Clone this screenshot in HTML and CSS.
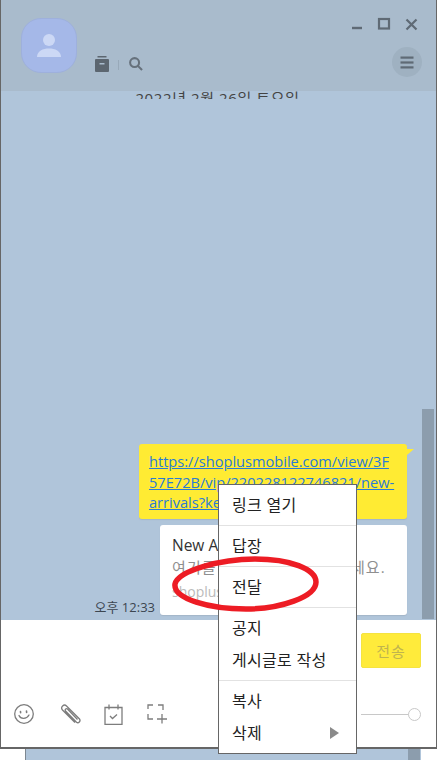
FILE: index.html
```html
<!DOCTYPE html>
<html lang="ko">
<head>
    <meta charset="UTF-8">
    <title>채팅</title>
    <link rel="stylesheet" href="styles.css">
</head>
<body>
    <!-- window behind the chat, only its bottom edge shows -->
    <div class="back-window"><div class="back-bar"></div></div>

    <div class="window">
        <header class="top">
            <div class="avatar">
                <svg width="38" height="38" viewBox="0 0 38 38"><circle cx="19" cy="13" r="6" fill="#ccd8f5"/><path d="M7 30c0-6 6-8.500 12-8.500S31 24 31 30z" fill="#ccd8f5"/></svg>
            </div>
            <div class="tools">
                <svg width="14" height="16" viewBox="0 0 14 16"><path d="M2.500 0h9v1.500h-9z" fill="#5c6670"/><path d="M1 3h12a1 1 0 0 1 1 1v11a1 1 0 0 1-1 1H1a1 1 0 0 1-1-1V4a1 1 0 0 1 1-1z" fill="#5c6670"/><path d="M4.500 7h5v1.500h-5z" fill="#a9bbcc"/></svg>
                <span class="tool-sep"></span>
                <svg width="14" height="14" viewBox="0 0 15 15" fill="none" stroke="#66717c" stroke-width="2.200"><circle cx="6" cy="6" r="4.800"/><path d="M9.500 9.500L14 14"/></svg>
            </div>
            <div class="controls">
                <div class="win-btns">
                    <svg width="12" height="12" viewBox="0 0 12 12"><path d="M1 10h10" stroke="#5f6a75" stroke-width="2.400"/></svg>
                    <svg width="14" height="14" viewBox="0 0 14 14" fill="none"><rect x="2" y="2" width="10" height="9.500" stroke="#5f6a75" stroke-width="2.200"/></svg>
                    <svg width="13" height="13" viewBox="0 0 13 13"><path d="M1.500 1.500l10 10M11.500 1.500l-10 10" stroke="#5f6a75" stroke-width="2.200"/></svg>
                </div>
                <div class="menu-btn">
                    <svg width="14" height="13" viewBox="0 0 14 13" fill="#5f6a75"><rect width="13" height="2.200" x="0.500" y="0.500"/><rect width="13" height="2.200" x="0.500" y="5.400"/><rect width="13" height="2.200" x="0.500" y="10.300"/></svg>
                </div>
            </div>
        </header>

        <main class="chat">
            <!-- date line is scrolled away, only its top shows -->
            <div class="date-clip"><div class="date">2022년 2월 26일 토요일</div></div>
            <div class="scrollbar"></div>
            <div class="msg-list">
                <div class="bubble">
                    <a href="#">https://shoplusmobile.com/view/3F<br>57E72B/vip/220228122746821/new-<br>arrivals?key=1</a>
                </div>
                <div class="msg-row">
                    <span class="time">오후 12:33</span>
                    <div class="card">
                        <div class="card-title">New Arrivals</div>
                        <div class="card-desc">여기를 눌러 링크를 확인하세요.</div>
                        <div class="card-host">shoplusmobile.com</div>
                    </div>
                </div>
            </div>
        </main>

        <section class="input">
            <div class="input-top">
                <button class="send">전송</button>
            </div>
            <div class="input-bottom">
                <div class="input-icons">
                    <svg width="22" height="22" viewBox="0 0 22 22" fill="none" stroke="#7d7d7d" stroke-width="1.300"><circle cx="11" cy="11" r="9.300"/><path d="M6 12.500c1.500 3.500 7 4.500 10-.5" stroke-linecap="round"/><path d="M7.500 8.500l.1 1.200M13.500 8l.1 1.500" stroke-width="1.600" stroke-linecap="round"/></svg>
                    <svg width="22" height="22" viewBox="0 0 22 22" fill="none" stroke="#7d7d7d" stroke-width="1.300"><path d="M16 19.500L3.500 7C1 4 5 .500 7.500 3l13 13c1.500 2-1 4.800-3 3.200L6.500 8c-1-1.500.8-3 2-2l10 10.500"/></svg>
                    <svg width="19" height="21" viewBox="0 0 19 21" fill="none" stroke="#7d7d7d" stroke-width="1.300"><path d="M1 3.500h17v17H1z"/><path d="M5 .500v5M14 .500v5" /><path d="M6 12l2.500 2.500L13 10.500"/></svg>
                    <svg width="21" height="20" viewBox="0 0 21 20" fill="none" stroke="#7d7d7d" stroke-width="1.300"><path d="M1 5V1h5M11 1h5v5M1 10v5h5"/><path d="M15 10v9.500M10 15h10"/></svg>
                </div>
                <div class="slider"><span class="slider-line"></span><span class="slider-knob"></span></div>
            </div>
        </section>
    </div>

    <div class="context-menu">
        <div class="item">링크 열기</div>
        <div class="sep"></div>
        <div class="item">답장</div>
        <div class="sep"></div>
        <div class="item">전달</div>
        <div class="sep"></div>
        <div class="item">공지</div>
        <div class="item">게시글로 작성</div>
        <div class="sep"></div>
        <div class="item">복사</div>
        <div class="item item-more">삭제<span class="arrow"></span></div>
    </div>

    <!-- red marker drawn over the screenshot -->
    <svg class="marker" width="152" height="62" viewBox="0 0 152 62" fill="none">
        <path d="M5 31C8 18 50 6 85 6c35 0 61 10 61 23 0 15-36 27-70 27C40 56 3 46 5 31z" stroke="#ed1c24" stroke-width="5.500"/>
    </svg>
</body>
</html>
```

FILE: styles.css
```css
* { box-sizing: border-box; }
html, body { margin: 0; height: 760px; overflow: hidden; }
body {
    background: #fff;
    font-family: "Open Sans", "Noto Sans CJK KR", sans-serif;
    position: relative;
}

.back-window {
    position: absolute;
    left: 25px;
    top: 700px;
    width: 396px;
    height: 60px;
    background: #b0c5da;
    border-left: 1px solid #7d8790;
}
.back-bar {
    position: absolute;
    right: 1px;
    top: 0;
    width: 12px;
    height: 60px;
    background: #8c9dad;
}

.window {
    position: relative;
    width: 437px;
    height: 749px;
    display: flex;
    flex-direction: column;
    background: #b0c5da;
    border-left: 1px solid #666;
    border-right: 1px solid #666;
    border-bottom: 2px solid #666;
    overflow: hidden;
}

.top {
    height: 91px;
    flex: none;
    display: flex;
    background: #a9bbcc;
    position: relative;
    z-index: 1;
    padding: 18px 0 0 20px;
}
.avatar {
    width: 56px;
    height: 55px;
    background: #a5b8e8;
    border: 1px solid #9eb0dc;
    border-radius: 20px;
    display: flex;
    align-items: center;
    justify-content: center;
}
.tools {
    display: flex;
    align-items: center;
    margin: 38px 0 0 18px;
    height: 16px;
}
.tool-sep {
    width: 1px;
    height: 10px;
    background: #98a9b9;
    margin: 2px 10px 0 9px;
}
.controls {
    margin-left: auto;
    display: flex;
    flex-direction: column;
    align-items: flex-end;
    margin-top: -1px;
    padding-right: 14px;
}
.win-btns {
    display: flex;
    align-items: center;
    gap: 14px;
    margin-right: 4px;
}
.menu-btn {
    width: 30px;
    height: 30px;
    border-radius: 50%;
    background: #9fb1c1;
    display: flex;
    align-items: center;
    justify-content: center;
    margin-top: 16px;
}

.chat {
    flex: 1;
    position: relative;
    overflow: hidden;
    display: flex;
    flex-direction: column;
}
.date-clip {
    height: 8px;
    overflow: hidden;
    flex: none;
}
.date {
    text-align: center;
    font-size: 15px;
    letter-spacing: 0.600px;
    line-height: 18px;
    color: #444;
    margin-top: -2px;
    padding-right: 2px;
}
.scrollbar {
    position: absolute;
    left: 421px;
    top: 318px;
    width: 12px;
    height: 210px;
    background: #8c9dad;
}
.msg-list {
    margin-top: auto;
    padding: 0 29px 5px 0;
    display: flex;
    flex-direction: column;
    align-items: flex-end;
    gap: 6px;
}
.bubble {
    width: 268px;
    height: 75px;
    background: #ffeb33;
    border-radius: 3px;
    padding: 7px 10px;
    font-size: 14.600px;
    line-height: 20.500px;
    position: relative;
    white-space: nowrap;
    box-shadow: 0 1px 1px #a3b5c8;
}
.bubble::after {
    content: "";
    position: absolute;
    left: 268px;
    top: 5px;
    border-top: 6px solid #ffeb33;
    border-right: 7px solid transparent;
}
.bubble a { color: #2a7bd6; text-decoration: underline; }
.msg-row {
    display: flex;
    align-items: flex-end;
    gap: 5px;
}
.time {
    font-size: 13px;
    line-height: 16px;
    color: #3c4650;
}
.card {
    width: 247px;
    height: 90px;
    background: #fff;
    border-radius: 3px;
    padding: 10px 12px;
    box-shadow: 0 1px 1px #a3b5c8;
}
.card-title { font-size: 15.500px; line-height: 20px; color: #333; white-space: nowrap; }
.card-desc { font-size: 15px; letter-spacing: 1.100px; line-height: 24px; color: #8f8f8f; white-space: nowrap; }
.card-host { font-size: 14px; line-height: 22px; color: #bbb; white-space: nowrap; margin-top: 2px; }

.input {
    height: 127px;
    flex: none;
    background: #fff;
    display: flex;
    flex-direction: column;
}
.input-top {
    display: flex;
    justify-content: flex-end;
    padding: 13px 15px 0 0;
}
.send {
    width: 60px;
    height: 35px;
    background: #ffeb3b;
    border: 1px solid #f5e340;
    border-radius: 2px;
    font-family: inherit;
    font-size: 15px;
    letter-spacing: 1px;
    color: #bfb44e;
    padding: 0;
}
.input-bottom {
    margin-top: auto;
    height: 46px;
    display: flex;
    align-items: center;
    padding: 0 15px 20px 12px;
}
.input-icons {
    display: flex;
    align-items: center;
    gap: 23.500px;
}
.slider {
    margin-left: auto;
    width: 60px;
    height: 13px;
    display: flex;
    align-items: center;
}
.slider-line { width: 48px; height: 1px; background: #c8c8c8; }
.slider-knob {
    width: 13px;
    height: 13px;
    border: 1.500px solid #c8c8c8;
    border-radius: 50%;
    background: #fff;
    margin-left: -1px;
    flex: none;
}

.context-menu {
    position: absolute;
    left: 218px;
    top: 484px;
    width: 139px;
    height: 270px;
    background: #fff;
    border: 1px solid #666;
    padding-top: 4px;
    display: flex;
    flex-direction: column;
}
.item {
    height: 32px;
    line-height: 32px;
    padding-left: 13px;
    font-size: 16px;
    letter-spacing: 0.300px;
    color: #222;
    white-space: nowrap;
    position: relative;
}
.sep { height: 1px; background: #e2e2e2; margin: 4px 0; }
.arrow {
    position: absolute;
    right: 17px;
    top: 10px;
    border-left: 9px solid #8a8a8a;
    border-top: 6px solid transparent;
    border-bottom: 6px solid transparent;
}

.marker {
    position: absolute;
    left: 170px;
    top: 553px;
}
```
